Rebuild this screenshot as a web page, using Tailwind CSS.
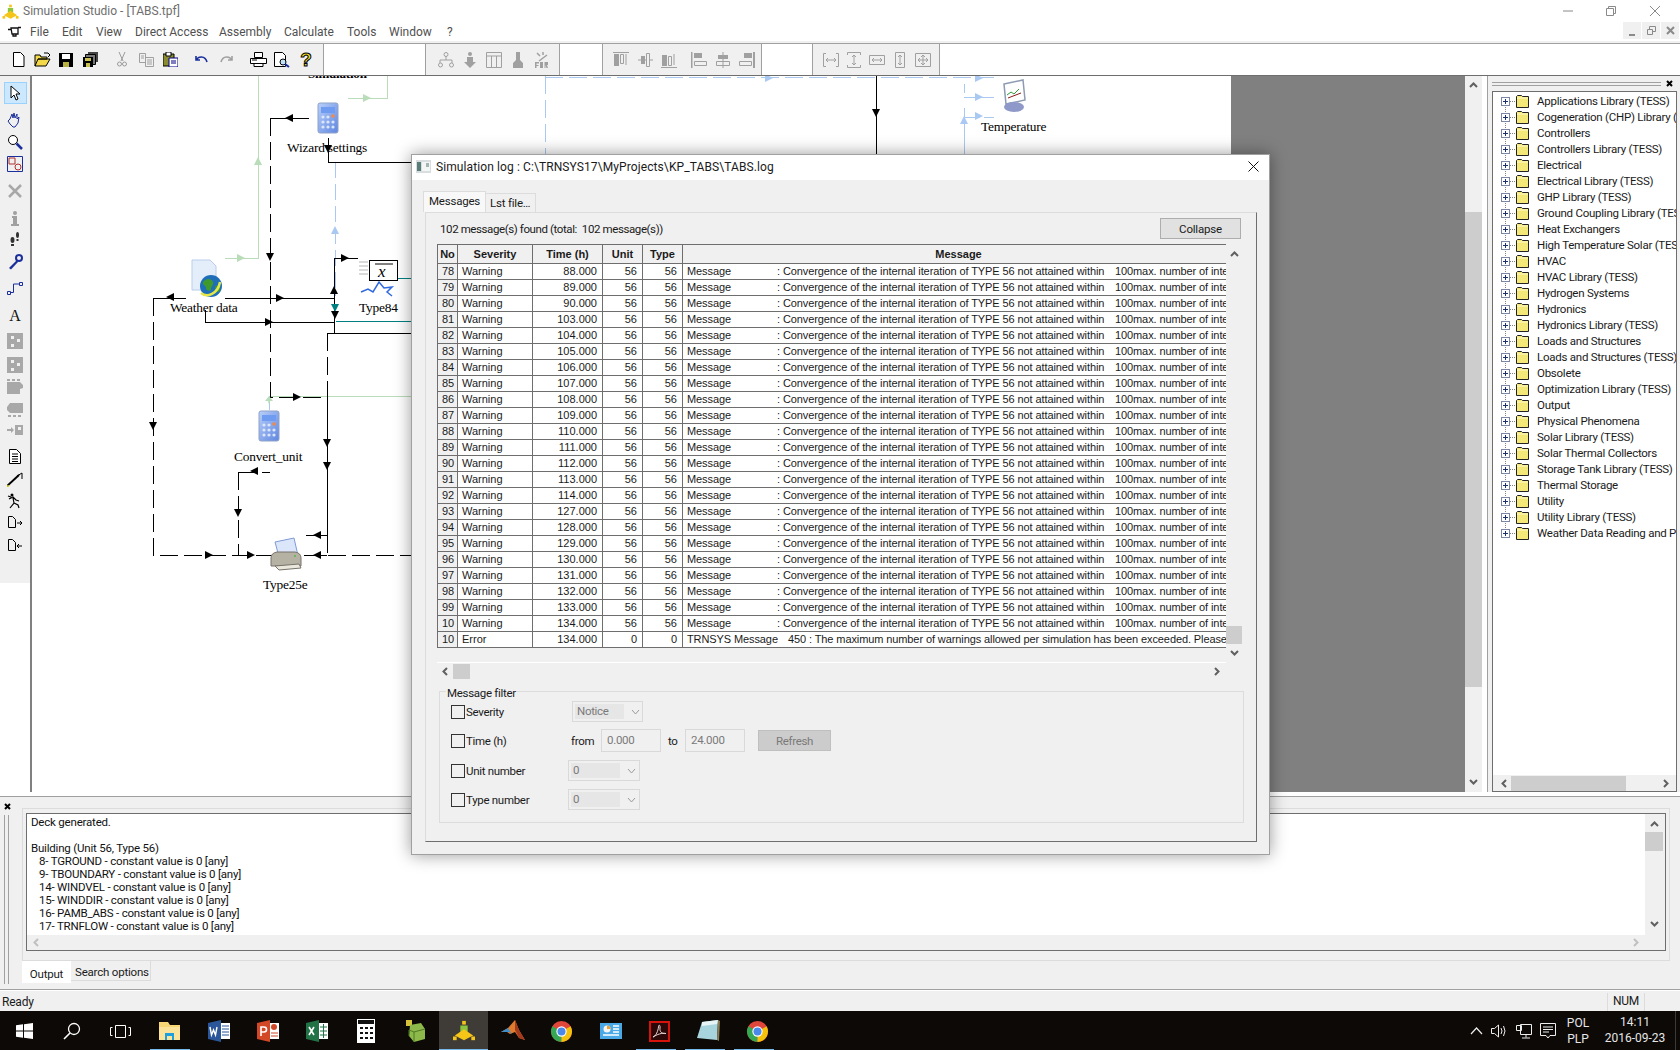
<!DOCTYPE html>
<html lang="en">
  <head>
    <title>Simulation Studio - [TABS.tpf]</title>
    <script src="https://cdn.jsdelivr.net/npm/@tailwindcss/browser@4"></script>
  </head>

  <body>
    <!-- shared icons -->
    <svg width="0" height="0" class="absolute">
      <defs>
        <path id="ar" d="M-4 -4L4 0L-4 4z" />
        <path id="al" d="M4 -4L-4 0L4 4z" />
        <path id="au" d="M-4 4L0 -4L4 4z" />
        <path id="ad" d="M-4 -4L0 4L4 -4z" />
        <linearGradient id="calcg" x1="0" y1="0" x2="1" y2="1"><stop offset="0" stop-color="#b9cffa" /><stop offset="1" stop-color="#5f86e0" /></linearGradient>
        <symbol id="calc" viewBox="0 0 22 32">
          <rect x="1" y="1" width="20" height="30" rx="2" fill="url(#calcg)" stroke="#8fa3c8" />
          <rect x="4" y="5" width="14" height="6" fill="#6f9cf0" />
          <g fill="#dbe6fb"><circle cx="6" cy="15" r="1.6" /><circle cx="11" cy="15" r="1.6" /><circle cx="6" cy="20" r="1.6" /><circle cx="11" cy="20" r="1.6" /><circle cx="16" cy="20" r="1.6" /><circle cx="6" cy="25" r="1.6" /><circle cx="11" cy="25" r="1.6" /><circle cx="16" cy="25" r="1.6" /></g>
          <circle cx="16" cy="14" r="1.8" fill="#ee8a4a" />
        </symbol>
        <symbol id="chrome" viewBox="0 0 24 24">
          <circle cx="12" cy="12" r="11" fill="#e0463a" />
          <path d="M12 12L2.5 6.5A11 11 0 0 0 12 23z" fill="#35a853" />
          <path d="M12 12L21.5 6.5A11 11 0 0 1 12 23z" fill="#f4c20d" />
          <circle cx="12" cy="12" r="5.4" fill="#fff" /><circle cx="12" cy="12" r="4.2" fill="#4a88ea" />
        </symbol>
        <symbol id="logo" viewBox="0 0 24 24">
          <rect x="10" y="1" width="4" height="4" fill="#f5c518" />
          <path d="M8 6h8v7H8z" fill="#8cc63f" />
          <path d="M12 10L22 17L12 22L2 17z" fill="#f5c518" />
          <rect x="0" y="18" width="4" height="4" fill="#f5c518" /><rect x="20" y="18" width="4" height="4" fill="#f5c518" />
        </symbol>
      </defs>
    </svg>

    <!-- Page -->
    <div class="relative w-[1680px] h-[1050px] overflow-hidden flex flex-col bg-white text-[12px] leading-[16px] tracking-[-0.2px] text-[#1a1a1a] font-['Roboto',sans-serif]">
      <!-- Title bar -->
      <div class="h-[22px] flex items-center relative shrink-0 tracking-normal">
        <svg class="ml-[2px] mt-[1px]" width="17" height="16"><use href="#logo" /></svg>
        <span class="ml-[4px] text-[#6e6e6e]">Simulation Studio - [TABS.tpf]</span>
        <div class="ml-auto flex items-center">
          <svg class="mr-[31px]" width="12" height="12" viewBox="0 0 12 12"><path d="M1 6h10" stroke="#8a8a8a" /></svg>
          <svg class="mr-[32px]" width="12" height="12" viewBox="0 0 12 12"><path d="M1.5 3.5h7v7h-7zM3.5 3.5v-2h7v7h-2" fill="none" stroke="#8a8a8a" /></svg>
          <svg class="mr-[19px]" width="12" height="12" viewBox="0 0 12 12"><path d="M1 1l10 10M11 1L1 11" stroke="#8a8a8a" /></svg>
        </div>
      </div>

      <!-- Menu bar -->
      <div class="h-[19px] flex items-center shrink-0 relative text-[#505050] tracking-normal">
        <svg class="ml-[7px] mr-[8px]" width="15" height="11" viewBox="0 0 15 11"><path d="M4 2h7v6H5zM1 3.5h3M11 1.5h3M6 8v2h3V8" fill="none" stroke="#111" stroke-width="1.3" /></svg>
        <span class="w-[32px]">File</span>
        <span class="w-[34px]">Edit</span>
        <span class="w-[39px]">View</span>
        <span class="w-[84px]">Direct Access</span>
        <span class="w-[65px]">Assembly</span>
        <span class="w-[63px]">Calculate</span>
        <span class="w-[42px]">Tools</span>
        <span class="w-[58px]">Window</span>
        <span>?</span>
        <div class="ml-auto flex gap-px mr-px h-[17px] -mt-[2px]">
          <div class="w-[18px] bg-[#f0f0f0] flex items-end justify-center pb-[3px]"><div class="w-[6px] h-[2px] bg-[#8a8a8a]"></div></div>
          <div class="w-[18px] bg-[#f0f0f0] flex items-center justify-center"><svg width="9" height="9" viewBox="0 0 9 9"><path d="M.5 3.5h5v5h-5zM2.5 3V.5h6v5H6" fill="none" stroke="#8a8a8a" /></svg></div>
          <div class="w-[18px] bg-[#f0f0f0] flex items-center justify-center"><svg width="9" height="9" viewBox="0 0 9 9"><path d="M1 1l7 7M8 1L1 8" stroke="#8a8a8a" stroke-width="2" /></svg></div>
        </div>
      </div>
      <div class="h-[2px] bg-[#f0f0f0] shrink-0"></div>
      <div class="h-px bg-[#a0a0a0] shrink-0"></div>

      <!-- Toolbars -->
      <div class="h-[32px] flex shrink-0 bg-white border-b border-[#6e6e6e]">
        <div class="w-[324px] bg-[#f0f0f0] border-r border-[#a0a0a0] flex items-center pl-[6px]">
          <div class="w-[24px] flex justify-center"><svg width="13" height="15" viewBox="0 0 13 15"><path d="M1.5 .5h7l3.5 3.500v10.500H1.500z" fill="#fff" stroke="#000" /></svg></div>
          <div class="w-[24px] flex justify-center"><svg width="17" height="15" viewBox="0 0 17 15"><path d="M1 3h5l1 2h6v2H4L1 14zM1 14h11l4-7H4" fill="#f3d94a" stroke="#000" /><path d="M10 1h4l2 2-2 2" fill="none" stroke="#000" /></svg></div>
          <div class="w-[24px] flex justify-center"><svg width="14" height="14" viewBox="0 0 14 14"><path d="M0 0h14v14H0z" fill="#000" /><path d="M3 1h8v5H3z" fill="#fff" /><path d="M4 9h6v5H4z" fill="#b8b040" /></svg></div>
          <div class="w-[24px] flex justify-center"><svg width="15" height="15" viewBox="0 0 15 15"><path d="M5 0h10v10H5z" fill="#444" /><path d="M2.500 2.500h10v10h-10z" fill="#777" stroke="#000" /><path d="M0 5h10v10H0z" fill="#000" /><path d="M2 6h6v3H2z" fill="#c8c050" /><path d="M3 11h4v4H3z" fill="#c8c050" /></svg></div>
          <div class="w-[24px] ml-[8px] flex justify-center"><svg width="10" height="15" viewBox="0 0 10 15"><path d="M2 0l4 9M8 0L4 9" stroke="#9a9a9a" /><circle cx="2.500" cy="12" r="2" fill="none" stroke="#9a9a9a" /><circle cx="7.500" cy="12" r="2" fill="none" stroke="#9a9a9a" /></svg></div>
          <div class="w-[24px] flex justify-center"><svg width="15" height="14" viewBox="0 0 15 14"><path d="M.5 .5h6v9h-6zM6.500 4.500h8v9h-8zM2 3h3M2 5h3M8 7h5M8 9h5M8 11h5" fill="#f0f0f0" stroke="#a0a0a0" /></svg></div>
          <div class="w-[24px] flex justify-center"><svg width="15" height="15" viewBox="0 0 15 15"><path d="M0 2h11v12H0z" fill="#8a8a30" stroke="#000" /><path d="M3 0h5v4H3z" fill="#fff" stroke="#000" /><path d="M6 6h9v9H6z" fill="#fff" stroke="#000080" /><path d="M8 9h5M8 11h5" stroke="#000080" /></svg></div>
          <div class="w-[24px] ml-[7px] flex justify-center"><svg width="13" height="9" viewBox="0 0 13 9"><path d="M1 1v4h4M1.500 5C3 1.500 10 0 12 7" fill="none" stroke="#1a2f9c" stroke-width="1.600" /></svg></div>
          <div class="w-[24px] ml-px flex justify-center"><svg width="13" height="9" viewBox="0 0 13 9"><path d="M12 1v4H8M11.500 5C10 1.500 3 0 1 7" fill="none" stroke="#a0a0a0" stroke-width="1.600" /></svg></div>
          <div class="w-[24px] ml-[8px] flex justify-center"><svg width="17" height="15" viewBox="0 0 17 15"><path d="M4.500 .5h8v5h-8zM.5 6.500h16v5H.500zM4 11.500h9v3H4z" fill="#fff" stroke="#000" /><path d="M2 8h5" stroke="#000" /></svg></div>
          <div class="w-[24px] flex justify-center"><svg width="16" height="16" viewBox="0 0 16 16"><path d="M.5 .5h8l3 3v11H.500z" fill="#fff" stroke="#000" /><circle cx="9" cy="10" r="3" fill="#bfe3f5" stroke="#000" /><path d="M11 12l4 3" stroke="#1a2f9c" stroke-width="2" /></svg></div>
          <div class="w-[24px] flex justify-center font-['Liberation_Sans',sans-serif] font-bold text-[19px] text-[#f4e22a] [-webkit-text-stroke:1px_#000]">?</div>
        </div>
        <div class="w-[101px]"></div>
        <div class="w-[135px] bg-[#f0f0f0] border-x border-[#a0a0a0] flex items-center pl-[8px]">
          <div class="w-[24px] flex justify-center"><svg width="16" height="16" viewBox="0 0 16 16"><path d="M8 4v4M2 8h12M2 8v3M14 8v3" stroke="#a0a0a0" fill="none" /><circle cx="8" cy="2.500" r="2" fill="none" stroke="#a0a0a0" /><circle cx="2.500" cy="13" r="2" fill="none" stroke="#a0a0a0" /><circle cx="13.500" cy="13" r="2" fill="none" stroke="#a0a0a0" /></svg></div>
          <div class="w-[24px] flex justify-center"><svg width="12" height="16" viewBox="0 0 12 16"><circle cx="6" cy="2" r="2" fill="#a0a0a0" /><path d="M3 5h6v5h3l-6 6-6-6h3z" fill="#a0a0a0" /></svg></div>
          <div class="w-[24px] flex justify-center"><svg width="16" height="16" viewBox="0 0 16 16"><path d="M.5 .5h15v15H.500zM.5 4h15M5.500 4v11.500M10.500 4v11.500" fill="none" stroke="#a0a0a0" /></svg></div>
          <div class="w-[24px] flex justify-center"><svg width="10" height="16" viewBox="0 0 10 16"><path d="M3 0h4v8l3 3v5H0v-5l3-3z" fill="#a0a0a0" /></svg></div>
          <div class="w-[24px] flex justify-center"><svg width="16" height="16" viewBox="0 0 16 16"><path d="M3 1l3 3M9 0v3M13 3l-8 6" stroke="#a0a0a0" stroke-width="1.500" /><path d="M1 10h4v1.500H2.500V13H4.500v1H2.500v2H1zM6 10h3v6H6zM10.500 10H14v3h-1l1 3h-1.500l-1-3v3h-1z" fill="#a0a0a0" /></svg></div>
        </div>
        <div class="w-[42px]"></div>
        <div class="w-[160px] bg-[#f0f0f0] border-x border-[#a0a0a0] flex items-center pl-[6px]">
          <div class="w-[24px] flex justify-center"><svg width="16" height="16" viewBox="0 0 16 16"><path d="M0 .5h16" stroke="#a0a0a0" /><path d="M1 2h5v12H1z" fill="#a0a0a0" /><path d="M7.500 2.500h3v9h-3z" fill="none" stroke="#a0a0a0" /><path d="M13 2v11" stroke="#a0a0a0" /></svg></div>
          <div class="w-[24px] flex justify-center"><svg width="15" height="14" viewBox="0 0 15 14"><path d="M0 7h15" stroke="#a0a0a0" /><path d="M3 3h4v8H3z" fill="#a0a0a0" /><path d="M8.500 .5h3v13h-3z" fill="#f0f0f0" stroke="#a0a0a0" /></svg></div>
          <div class="w-[24px] flex justify-center"><svg width="16" height="16" viewBox="0 0 16 16"><path d="M0 15.500h16" stroke="#a0a0a0" /><path d="M1 3h5v11H1z" fill="#a0a0a0" /><path d="M7.500 4.500h3v9h-3z" fill="none" stroke="#a0a0a0" /><path d="M13 2v11" stroke="#a0a0a0" /></svg></div>
          <div class="w-[24px] ml-[6px] flex justify-center"><svg width="16" height="16" viewBox="0 0 16 16"><path d="M.5 0v16" stroke="#a0a0a0" stroke-width="2" /><path d="M3 1h8v5H3z" fill="#a0a0a0" /><path d="M3.500 9.500h12v4h-12z" fill="none" stroke="#a0a0a0" /></svg></div>
          <div class="w-[24px] flex justify-center"><svg width="14" height="16" viewBox="0 0 14 16"><path d="M7 0v16" stroke="#a0a0a0" /><path d="M2 3h10v4H2z" fill="#a0a0a0" /><path d="M.5 9.500h13v4H.500z" fill="none" stroke="#a0a0a0" /></svg></div>
          <div class="w-[24px] flex justify-center"><svg width="16" height="16" viewBox="0 0 16 16"><path d="M15 0v16" stroke="#a0a0a0" stroke-width="2" /><path d="M5 1h8v5H5z" fill="#a0a0a0" /><path d="M.5 9.500h12v4H.500z" fill="none" stroke="#a0a0a0" /></svg></div>
        </div>
        <div class="w-[50px]"></div>
        <div class="w-[128px] bg-[#f0f0f0] border-x border-[#a0a0a0] flex items-center pl-[6px]">
          <div class="w-[23px] flex justify-center"><svg width="16" height="14" viewBox="0 0 16 14"><path d="M3 .5H.5v13H3M13 .5h2.500v13H13M3 7h10M5 5L3 7l2 2M11 5l2 2-2 2" fill="none" stroke="#a0a0a0" /></svg></div>
          <div class="w-[23px] flex justify-center"><svg width="14" height="16" viewBox="0 0 14 16"><path d="M.5 3V.5h13V3M.5 13v2.500h13V13M7 3v10M5 5l2-2 2 2M5 11l2 2 2-2" fill="none" stroke="#a0a0a0" /></svg></div>
          <div class="w-[23px] flex justify-center"><svg width="16" height="10" viewBox="0 0 16 10"><path d="M.5 .5h15v9H.500zM3 5h10M5 3L3 5l2 2M11 3l2 2-2 2" fill="none" stroke="#a0a0a0" /></svg></div>
          <div class="w-[23px] flex justify-center"><svg width="10" height="16" viewBox="0 0 10 16"><path d="M.5 .5h9v15h-9zM5 3v10M3 5l2-2 2 2M3 11l2 2 2-2" fill="none" stroke="#a0a0a0" /></svg></div>
          <div class="w-[23px] flex justify-center"><svg width="16" height="14" viewBox="0 0 16 14"><path d="M.5 .5h15v13H.500zM3 7h10M8 2v10M5 5L3 7l2 2M11 5l2 2-2 2M6 4l2-2 2 2M6 10l2 2 2-2" fill="none" stroke="#a0a0a0" /></svg></div>
        </div>
      </div>

      <!-- Middle: left tools, canvas, library tree -->
      <div class="h-[716px] flex shrink-0">
        <div class="w-[30px] bg-white shrink-0">
          <div class="h-[507px] bg-[#f0f0f0] flex flex-col items-center">
            <div class="mt-[6px] w-[23px] h-[22px] bg-[#cce8ff] border border-[#99d1ff] flex items-center justify-center"><svg width="10" height="16" viewBox="0 0 10 16"><path d="M1 1v12l3-3 2 5 2-1-2-5h4z" fill="#fff" stroke="#000" /></svg></div>
            <svg class="mt-[8px]" width="16" height="16" viewBox="0 0 16 16"><path d="M3 7L5 2l1 4 1-5 1 5 2-4v5l2-2-1 6-3 4H6L3 12 1 9z" fill="none" stroke="#1a2f9c" /></svg>
            <svg class="mt-[6px]" width="16" height="16" viewBox="0 0 16 16"><circle cx="6" cy="6" r="4.500" fill="#fff" stroke="#000" /><path d="M9.500 9.500L15 15" stroke="#1a2f9c" stroke-width="2.500" /></svg>
            <svg class="mt-[6px]" width="16" height="16" viewBox="0 0 16 16"><path d="M.5 .5h15v15H.500z" fill="none" stroke="#1a2f9c" /><path d="M2 2h6v6H2z" fill="none" stroke="#b03030" /><circle cx="11" cy="11" r="3" fill="none" stroke="#b03030" /></svg>
            <svg class="mt-[12px]" width="14" height="14" viewBox="0 0 14 14"><path d="M1 1l12 12M13 1L1 13" stroke="#a8a8a8" stroke-width="2.500" /></svg>
            <svg class="mt-[13px]" width="8" height="15" viewBox="0 0 8 15"><circle cx="4" cy="2" r="2" fill="#a0a0a0" /><path d="M1 5h5v8h2v2H0v-2h2V7H1z" fill="#a0a0a0" /></svg>
            <svg class="mt-[6px]" width="10" height="14" viewBox="0 0 10 14"><ellipse cx="7.500" cy="3" rx="1.500" ry="3" fill="#333" /><ellipse cx="2.500" cy="8" rx="2" ry="3" fill="#333" /><rect x="1" y="12" width="3" height="2" fill="#333" /><rect x="6.500" y="7" width="2" height="2" fill="#333" /></svg>
            <svg class="mt-[8px]" width="15" height="16" viewBox="0 0 15 16"><circle cx="11" cy="4" r="3" fill="none" stroke="#1a2f9c" stroke-width="2" /><path d="M9 6L1 14l2 1.500L10 8" fill="#1a2f9c" /></svg>
            <svg class="mt-[12px]" width="16" height="13" viewBox="0 0 16 13"><path d="M.5 9.500h3v3h-3zM12.500 .5h3v3h-3zM3.500 10.500h3V2h6" fill="none" stroke="#1a2f9c" /></svg>
            <div class="mt-[12px] h-[18px] font-['Liberation_Serif',serif] font-normal text-[16px] leading-[18px] text-[#111]">A</div>
            <svg class="mt-[8px]" width="16" height="16" viewBox="0 0 16 16"><path d="M0 0h16v16H0z" fill="#a8a8a8" /><path d="M4 3h3v3H4zM10 6h3v3h-3zM4 11h3v3H4z" fill="#f0f0f0" /></svg>
            <svg class="mt-[8px]" width="16" height="16" viewBox="0 0 16 16"><path d="M0 0h16v16H0z" fill="#a8a8a8" /><path d="M4 3h3v3H4zM10 6h3v3h-3zM4 11h3v3H4z" fill="#f0f0f0" /></svg>
            <svg class="mt-[6px]" width="16" height="15" viewBox="0 0 16 15"><path d="M0 3h13l3 3v3l-3 1v5H0z" fill="#a8a8a8" /><path d="M0 0h3v2H0zM5 0h3v2H5zM10 0h3v2h-3z" fill="#a8a8a8" /></svg>
            <svg class="mt-[9px]" width="16" height="15" viewBox="0 0 16 15"><path d="M3 0h13v10H3l-3-3V4z" fill="#a8a8a8" /><path d="M1 12h3v2H1zM6 12h3v2H6zM11 12h3v2h-3z" fill="#a8a8a8" /></svg>
            <svg class="mt-[7px]" width="16" height="10" viewBox="0 0 16 10"><path d="M0 4h4V2l3 3-3 3V6H0zM8 0h8v10H8z" fill="#a8a8a8" /><path d="M11 2h3v3h-3z" fill="#f0f0f0" /></svg>
            <svg class="mt-[14px]" width="12" height="15" viewBox="0 0 12 15"><path d="M.5 .5h7l4 4v10H.500zM3 5h6M3 7.500h6M3 10h6M3 12.500h6" fill="#fff" stroke="#000" /></svg>
            <svg class="mt-[8px]" width="16" height="15" viewBox="0 0 16 15"><path d="M0 14L12 3" stroke="#000" stroke-width="2" /><path d="M10 4l5-3v6" fill="none" stroke="#000" /><path d="M0 14h2" stroke="#e8d800" stroke-width="1.500" /></svg>
            <svg class="mt-[6px]" width="16" height="16" viewBox="0 0 16 16"><circle cx="5" cy="2" r="1.500" fill="#000" /><path d="M2 6l4-2 3 3 3 1M6 5l1 5-4 5M7 10l4 2 1 3M1 3l3 1" fill="none" stroke="#000" stroke-width="1.200" /></svg>
            <svg class="mt-[7px]" width="15" height="12" viewBox="0 0 15 12"><path d="M.5 .5h4l3 3v8h-7zM9 7h5M12 5l2 2-2 2" fill="none" stroke="#000" /></svg>
            <svg class="mt-[11px]" width="15" height="12" viewBox="0 0 15 12"><path d="M.5 .5h4l3 3v8h-7zM9 7h5M11 5L9 7l2 2" fill="none" stroke="#000" /></svg>
          </div>
        </div>
        <div class="w-[2px] bg-[#808080] shrink-0"></div>

        <!-- Canvas (page coordinates via the translate below) -->
        <div class="w-[1199px] relative overflow-hidden bg-white shrink-0">
          <svg class="absolute inset-0" width="1199" height="716">
            <g transform="translate(-32 -76)" fill="none">
              <text x="308" y="78" fill="#000" stroke="none" font-family="Liberation Serif" font-weight="700" font-size="13">Simulation</text>
              <g shape-rendering="crispEdges">
                <g stroke="#b9dcb9">
                  <path d="M258 76V258H225M348 98H387.500V76M270 396H411" />
                </g>
                <g stroke="#a9c9f2">
                  <path d="M335 162V296" stroke-dasharray="16 6" />
                  <path d="M545 76V154M545 77H994" stroke-dasharray="18 6" />
                  <path d="M964 84V93M964 108V154M964 97H994" />
                  <path d="M964 117H994" stroke-dasharray="16 4" />
                  <path d="M269 396V410" />
                </g>
                <g stroke="#008080"><path d="M398 278H411M336 321H411" /></g>
                <g stroke="#000">
                  <path d="M309 118H270M328 138V162H411M876 76V154M225 298H335M186 298H153M205 310V322H335M334 258V333M334 258H358M327 397V535M327 535H306M327 555H306M327 333H411" />
                  <path d="M270 118V397H327M153 298V555H411M238 472V555M238 472H270M327 333V397M327 535V555" stroke-dasharray="18 6" />
                </g>
              </g>
              <g fill="#b9dcb9"><use href="#au" x="258" y="161" /><use href="#ar" x="241" y="258" /><use href="#ar" x="367" y="98" /></g>
              <g fill="#a9c9f2"><use href="#au" x="335" y="230" /><use href="#ar" x="769" y="78" /><use href="#ar" x="979" y="78" /><use href="#ar" x="979" y="97" /><use href="#ar" x="979" y="116" /><use href="#au" x="964" y="120" /></g>
              <path d="M269 396l-4 5h3l1 4 1-4h3z" fill="#b9dcb9" />
              <use href="#ad" x="335" y="308" fill="#008080" />
              <g fill="#000">
                <use href="#al" x="289" y="118" /><use href="#ad" x="328" y="149" /><use href="#ad" x="876" y="113" /><use href="#ad" x="270" y="257" />
                <use href="#ar" x="280" y="298" /><use href="#al" x="170" y="297" /><use href="#ad" x="153" y="426" /><use href="#ar" x="209" y="555" /><use href="#ar" x="251" y="555" />
                <use href="#ad" x="238" y="513" /><use href="#al" x="254" y="471" /><use href="#al" x="317" y="555" /><use href="#al" x="317" y="535" />
                <use href="#ad" x="327" y="443" /><use href="#ad" x="327" y="466" /><use href="#ar" x="345" y="258" /><use href="#au" x="334" y="290" /><use href="#ad" x="335" y="315" />
                <use href="#ar" x="269" y="322" /><use href="#ar" x="297" y="397" />
              </g>

              <use href="#calc" x="317" y="102" width="22" height="32" />
              <use href="#calc" x="258" y="410" width="22" height="32" />
              <!-- weather -->
              <path d="M192 260h18l6 6v24h-24z" fill="#e4eefb" stroke="#b8cdec" />
              <circle cx="211" cy="286" r="11" fill="#1f6fb8" />
              <path d="M203 282c4-5 9-3 10 0s-2 4-2 7-5 2-5-1-4-3-3-6zM215 286c3-1 5 0 5 3s-3 4-4 2z" fill="#3f9a2e" />
              <path d="M201 293c6 5 17 1 19-11" stroke="#e6e84a" stroke-width="2.500" />
              <!-- type84 -->
              <path d="M359 262h9M359 266h9M359 270h9M359 274h9" stroke="#b5b5b5" />
              <rect x="369.500" y="260.500" width="28" height="20" fill="#fff" stroke="#000" />
              <path d="M375 264h18" stroke="#000" />
              <text x="378" y="277" fill="#000" stroke="none" font-family="Liberation Serif" font-style="italic" font-size="17">x</text>
              <path d="M361 292l7-3 5 3 6-10 5 6 8-1-5 5 5 4" stroke="#2f6ae0" stroke-width="1.500" />
              <!-- monitor -->
              <path d="M1004 84l19-4 2 20-19 4z" fill="#fff" stroke="#8e9bb3" stroke-width="1.500" />
              <path d="M1007 95l4-3 3 2 5-5" stroke="#2e9d3a" />
              <path d="M1008 98l13-5" stroke="#8a1c1c" />
              <ellipse cx="1014" cy="107" rx="10" ry="5" fill="#8f99c9" />
              <!-- printer -->
              <path d="M275 542l19-4 5 22-18 4z" fill="#dce6fa" stroke="#7f9ad6" />
              <path d="M271 558q0-5 6-6h18q6 1 6 6v8h-30z" fill="#b5b1a3" stroke="#77736a" />
              <path d="M275 566l24-2 2 4-22 2z" fill="#eae7dd" stroke="#77736a" />
              <circle cx="295" cy="556" r="1" fill="#53b84b" />

              <g fill="#000" stroke="none" font-family="Liberation Serif" font-size="13.400">
                <text x="287" y="152">Wizard settings</text>
                <text x="981" y="131">Temperature</text>
                <text x="170" y="312">Weather data</text>
                <text x="359" y="312">Type84</text>
                <text x="234" y="461">Convert_unit</text>
                <text x="263" y="589">Type25e</text>
              </g>
            </g>
          </svg>
        </div>
        <div class="w-[234px] bg-[#808080] shrink-0"></div>

        <!-- Main vertical scrollbar -->
        <div class="w-[17px] bg-[#f0f0f0] flex flex-col items-center shrink-0">
          <svg class="mt-[6px]" width="9" height="6" viewBox="0 0 9 6"><path d="M1 5l3.500-3.500L8 5" fill="none" stroke="#606060" stroke-width="2" /></svg>
          <div class="mt-[124px] w-full h-[475px] bg-[#cdcdcd]"></div>
          <svg class="mt-[92px]" width="9" height="6" viewBox="0 0 9 6"><path d="M1 1l3.500 3.500L8 1" fill="none" stroke="#606060" stroke-width="2" /></svg>
        </div>
        <div class="w-[2px] bg-white shrink-0"></div>

        <!-- Library tree -->
        <div class="flex-1 bg-[#f0f0f0] border-l border-[#a0a0a0] ml-[3px] flex flex-col min-w-0">
          <div class="h-[15px] flex items-center pl-[4px] shrink-0">
            <div class="w-[169px] h-[4px] border-y border-[#a0a0a0]"></div>
            <svg class="ml-[4px]" width="9" height="9" viewBox="0 0 9 9"><path d="M2 2l5 5M7 2L2 7" stroke="#000" stroke-width="2" /></svg>
          </div>
          <div class="ml-[4px] mr-[3px] h-[701px] border border-[#6e6e6e] bg-white flex flex-col overflow-hidden">
            <div id="tree" class="flex-1 pt-[1px] overflow-hidden whitespace-nowrap text-[11.5px] tracking-[-0.25px]"></div>
            <div class="h-[16px] bg-[#f0f0f0] flex items-center shrink-0">
              <svg class="ml-[8px]" width="6" height="9" viewBox="0 0 6 9"><path d="M5 1L1.500 4.500 5 8" fill="none" stroke="#606060" stroke-width="2" /></svg>
              <div class="ml-[4px] w-[115px] h-[15px] bg-[#cdcdcd]"></div>
              <svg class="ml-[37px]" width="6" height="9" viewBox="0 0 6 9"><path d="M1 1l3.500 3.500L1 8" fill="none" stroke="#606060" stroke-width="2" /></svg>
            </div>
          </div>
        </div>
      </div>

      <!-- Output panel -->
      <div class="h-[4px] bg-white shrink-0"></div>
      <div class="h-px bg-[#a0a0a0] shrink-0"></div>
      <div class="h-[192px] bg-[#f0f0f0] shrink-0 flex text-[11.5px]">
        <div class="w-[21px] shrink-0 flex flex-col">
          <svg class="mt-[5px] ml-[3px]" width="9" height="9" viewBox="0 0 9 9"><path d="M2 2l5 5M7 2L2 7" stroke="#000" stroke-width="2" /></svg>
          <div class="mt-[4px] ml-[4px] w-[5px] h-[169px] border-x border-[#a0a0a0]"></div>
        </div>
        <div class="flex-1 flex flex-col pr-[10px]">
          <div class="mt-[11px] ml-px mr-0 h-[153px] border border-[#dcdcdc] pt-[4px] pl-[3px] pr-[3px]">
            <div class="h-[138px] border border-[#6e6e6e] flex flex-col">
              <div class="flex h-[121px]">
                <div class="flex-1 bg-white pl-[4px] pt-[2px] leading-[13px] whitespace-pre text-[#111]">Deck generated.

Building (Unit 56, Type 56)
   8- TGROUND - constant value is 0 [any]
   9- TBOUNDARY - constant value is 0 [any]
   14- WINDVEL - constant value is 0 [any]
   15- WINDDIR - constant value is 0 [any]
   16- PAMB_ABS - constant value is 0 [any]
   17- TRNFLOW - constant value is 0 [any]</div>
                <div class="w-[18px] mr-[2px] bg-[#f0f0f0] flex flex-col items-center">
                  <svg class="mt-[7px]" width="9" height="6" viewBox="0 0 9 6"><path d="M1 5l3.500-3.500L8 5" fill="none" stroke="#606060" stroke-width="2" /></svg>
                  <div class="mt-[5px] w-full h-[19px] bg-[#cdcdcd]"></div>
                  <svg class="mt-[70px]" width="9" height="6" viewBox="0 0 9 6"><path d="M1 1l3.500 3.500L8 1" fill="none" stroke="#606060" stroke-width="2" /></svg>
                </div>
              </div>
              <div class="h-[15px] flex items-center justify-between px-[6px] pr-[26px]">
                <svg width="6" height="9" viewBox="0 0 6 9"><path d="M5 1L1.500 4.500 5 8" fill="none" stroke="#c0c0c0" stroke-width="2" /></svg>
                <svg width="6" height="9" viewBox="0 0 6 9"><path d="M1 1l3.500 3.500L1 8" fill="none" stroke="#c0c0c0" stroke-width="2" /></svg>
              </div>
            </div>
          </div>
          <div class="flex items-start">
            <div class="w-[49px] h-[22px] ml-px bg-white text-center pt-[5px]">Output</div>
            <div class="w-[80px] h-[20px] border-r border-b border-[#dcdcdc] pt-[3px] pl-[4px] whitespace-nowrap">Search options</div>
          </div>
        </div>
      </div>
      <div class="h-px bg-[#a0a0a0] shrink-0"></div>
      <div class="h-px bg-white shrink-0"></div>

      <!-- Status bar -->
      <div class="h-[20px] bg-[#f0f0f0] flex items-center shrink-0 pt-px">
        <span class="ml-[2px]">Ready</span>
        <div class="ml-auto mr-[35px] w-[38px] h-[18px] border-x border-[#dcdcdc] text-center">NUM</div>
      </div>

      <!-- Taskbar -->
      <div class="h-[40px] bg-[#0c0906] flex text-[#e6e6e6] shrink-0">
        <div class="w-[48px] flex items-center justify-center"><svg width="17" height="16" viewBox="0 0 17 16"><path d="M0 2.300L7 1.300V7.500H0zM8 1.200L17 0V7.500H8zM0 8.500H7V14.700L0 13.700zM8 8.500H17V16L8 14.800z" fill="#fff" /></svg></div>
        <div class="w-[48px] flex items-center justify-center"><svg width="18" height="18" viewBox="0 0 18 18"><circle cx="11" cy="7" r="5.500" fill="none" stroke="#fff" stroke-width="1.300" /><path d="M7 11l-6 6" stroke="#fff" stroke-width="1.600" /></svg></div>
        <div class="w-[49px] flex items-center justify-center"><svg width="21" height="13" viewBox="0 0 21 13"><path d="M5.500 .5h10v12h-10zM2.500 2.500H.5v8h2M18.500 2.500h2v8h-2" fill="none" stroke="#fff" /></svg></div>
        <div class="w-[49px] relative flex items-center justify-center"><svg width="21" height="18" viewBox="0 0 21 18"><path d="M0 0h9l2 3h10v15H0z" fill="#f7d774" /><path d="M0 5h21v13H0z" fill="#fbe39a" /><path d="M6 11h9v7h-2v-4H8v4H6z" fill="#1e9fe0" /></svg><div class="absolute bottom-0 left-[5px] w-[40px] h-[2px] bg-[#76b9ed]"></div></div>
        <div class="w-[49px] flex items-center justify-center"><svg width="22" height="22" viewBox="0 0 22 22"><path d="M0 3l13-3v22L0 19z" fill="#2b579a" /><path d="M13 3h9v16h-9z" fill="#fff" /><path d="M14 6h7M14 9h7M14 12h7M14 15h7" stroke="#2b579a" /><path d="M2 7l1.500 8 2-5 2 5L9 7" fill="none" stroke="#fff" stroke-width="1.400" /></svg></div>
        <div class="w-[49px] flex items-center justify-center"><svg width="22" height="22" viewBox="0 0 22 22"><path d="M0 3l13-3v22L0 19z" fill="#d24726" /><path d="M13 3h9v16h-9z" fill="#fff" /><path d="M14 13h7M14 16h7" stroke="#d24726" /><circle cx="17" cy="7" r="3" fill="#d24726" /><path d="M4 16V7h3a2.500 2.500 0 0 1 0 5H4" fill="none" stroke="#fff" stroke-width="1.600" /></svg></div>
        <div class="w-[49px] flex items-center justify-center"><svg width="22" height="22" viewBox="0 0 22 22"><path d="M0 3l13-3v22L0 19z" fill="#217346" /><path d="M13 3h9v16h-9z" fill="#fff" /><path d="M14 7h7M14 11h7M14 15h7M17.500 4v14" stroke="#217346" /><path d="M3 7l5 8M8 7l-5 8" stroke="#fff" stroke-width="1.600" /></svg></div>
        <div class="w-[49px] flex items-center justify-center"><svg width="18" height="24" viewBox="0 0 18 24"><path d="M0 0h18v24H0z" fill="#fff" /><path d="M1 1h16v4H1z" fill="#111" /><path d="M3 8h3v2H3zM8 8h3v2H8zM13 8h3v2h-3zM3 13h3v2H3zM8 13h3v2H8zM13 13h3v2h-3zM3 18h3v2H3zM8 18h3v2H8zM13 18h3v2h-3z" fill="#111" /></svg></div>
        <div class="w-[49px] flex items-center justify-center"><svg width="24" height="24" viewBox="0 0 24 24"><path d="M3 1h6v6H3z" fill="#d6c33b" /><path d="M7 6l11-2 4 6v10l-11 3-5-6z" fill="#8db84a" /><path d="M11 23V13l11-3" fill="none" stroke="#4f7a24" /><path d="M6 17v-6l5 2" fill="none" stroke="#4f7a24" /></svg></div>
        <div class="w-[49px] relative bg-[#3f3c38] flex items-center justify-center"><svg width="24" height="22"><use href="#logo" /></svg><div class="absolute bottom-0 left-0 w-full h-[2px] bg-[#76b9ed]"></div></div>
        <div class="w-[49px] flex items-center justify-center"><svg width="24" height="22" viewBox="0 0 24 22"><path d="M0 12l7-4 7-8 4 10 6 10-6-2-4-6-5 2-3-2z" fill="#dd7b2f" /><path d="M0 12l7-4 4 6-3-2z" fill="#3f8dc9" /><path d="M14 0l4 10 6 10-6-2-4-8z" fill="#a3391d" /></svg></div>
        <div class="w-[49px] flex items-center justify-center"><svg width="23" height="23"><use href="#chrome" /></svg></div>
        <div class="w-[49px] flex items-center justify-center"><svg width="22" height="16" viewBox="0 0 22 16"><path d="M0 0h22v16H0z" fill="#4aa8e6" /><circle cx="7" cy="6" r="3.500" fill="#f5f5f5" /><path d="M7 6V2.500A3.500 3.500 0 0 1 10.500 6z" fill="#f0a030" /><path d="M13 3h6M13 6h6M13 9h6M3 12h16" stroke="#fff" stroke-width="1.300" /></svg></div>
        <div class="w-[49px] relative flex items-center justify-center"><div class="w-[21px] h-[21px] bg-[#2b0707] border-2 border-[#d7140c] flex items-center justify-center"><svg width="15" height="15" viewBox="0 0 15 15"><path d="M1 13c3-1 5-6 5.500-10 0-3 2-2 1.500 1-.5 4 2 6 6 5.500-4-1-9 1-13 3.500z" fill="none" stroke="#e6d9d9" /></svg></div><div class="absolute bottom-0 left-[1px] w-[40px] h-[2px] bg-[#76b9ed]"></div></div>
        <div class="w-[49px] relative flex items-center justify-center"><svg width="23" height="22" viewBox="0 0 23 22"><path d="M5 2l16-2-1 20-20-2z" fill="#a8d4de" /><path d="M5 2l16-2-1 4L5 6z" fill="#e7f4f6" /><path d="M21 0l2 1-1 20-2-1z" fill="#8b7d55" /></svg><div class="absolute bottom-0 left-[1px] w-[40px] h-[2px] bg-[#76b9ed]"></div></div>
        <div class="w-[49px] relative flex items-center justify-center"><svg width="23" height="23"><use href="#chrome" /></svg><div class="absolute bottom-0 left-[1px] w-[40px] h-[2px] bg-[#76b9ed]"></div></div>
        <div class="ml-auto flex items-center tracking-normal">
          <svg class="mr-[8px]" width="13" height="8" viewBox="0 0 13 8"><path d="M1 7l5.500-6L12 7" fill="none" stroke="#eee" stroke-width="1.200" /></svg>
          <svg class="mr-[9px]" width="16" height="14" viewBox="0 0 16 14"><path d="M.5 4.500h3l4-3.500v12l-4-3.500h-3zM10 4q2 3 0 6M12.500 2q3 5 0 10" fill="none" stroke="#eee" /></svg>
          <svg class="mr-[8px]" width="16" height="15" viewBox="0 0 16 15"><path d="M4.500 .5h11v10h-11zM.5 1.500h5v5h-5zM10 10.500v3M6 14h8" fill="#0c0906" stroke="#eee" /></svg>
          <svg class="mr-[7px]" width="16" height="16" viewBox="0 0 16 16"><path d="M.5 .5h15v12H10l-2 2.500-2-2.500H.5zM3 4h10M3 6.500h10M3 9h6" fill="none" stroke="#eee" /></svg>
          <div class="w-[30px] flex flex-col items-center leading-[16px] mr-[11px]"><span>POL</span><span>PLP</span></div>
          <div class="w-[62px] flex flex-col items-center leading-[16px] mr-[9px] pb-[2px]"><span>14:11</span><span>2016-09-23</span></div>
          <div class="w-px h-full bg-[#3a3a3a] mr-[4px]"></div>
        </div>
      </div>

      <!-- Simulation log dialog -->
      <div class="absolute left-[411px] top-[154px] w-[859px] h-[701px] bg-[#f0f0f0] border border-[#a0a0a0] shadow-[0_0_16px_rgba(0,0,0,0.4)] flex flex-col">
        <div class="h-[25px] bg-white flex items-center shrink-0 tracking-[0.1px] pb-[2px]">
          <svg class="ml-[4px]" width="15" height="13" viewBox="0 0 15 13"><path d="M0 0h15v13H0z" fill="#d8dde0" /><path d="M1 2h4v9H1z" fill="#5a7d7a" /><path d="M6 2h8v9H6z" fill="#f4f6f6" /><path d="M10 3h3v4h-3z" fill="#a5b5b5" /></svg>
          <span class="ml-[5px]">Simulation log : C:\TRNSYS17\MyProjects\KP_TABS\TABS.log</span>
          <svg class="ml-auto mr-[10px]" width="11" height="11" viewBox="0 0 11 11"><path d="M.5 .5l10 10M10.500 .5l-10 10" stroke="#111" /></svg>
        </div>

        <div class="h-[11px] shrink-0"></div>
        <div class="flex items-end h-[21px] ml-[11px] shrink-0 whitespace-nowrap text-[11.5px]">
          <div class="w-[63px] h-[21px] bg-[#f8f8f8] border-x border-t border-[#dcdcdc] text-center pt-[1px]">Messages</div>
          <div class="w-[50px] h-[19px] border-r border-t border-[#dcdcdc] pl-[4px] pt-[1px]">Lst file…</div>
        </div>

        <div class="ml-[13px] w-[832px] h-[630px] border-t border-l border-[#dcdcdc] border-r border-r-[#6e6e6e] border-b border-b-[#6e6e6e] shrink-0">
          <div class="mt-[5px] h-[21px] flex items-center justify-between pl-[14px] pr-[15px] text-[11.5px]">
            <span class="whitespace-pre tracking-[-0.4px]">102 message(s) found (total:  102 message(s))</span>
            <div class="w-[81px] h-[21px] bg-[#e1e1e1] border border-[#adadad] text-center leading-[20px]">Collapse</div>
          </div>

          <!-- Message grid -->
          <div class="mt-[5px] ml-[11px] flex">
            <div class="w-[789px] h-[419px] border-b border-white overflow-hidden">
              <div id="grid" class="border-t border-l border-[#6e6e6e] font-['Liberation_Sans',sans-serif] text-[11px] tracking-normal"></div>
            </div>
            <div class="w-[16px] flex flex-col items-center relative">
              <svg class="mt-[7px]" width="9" height="6" viewBox="0 0 9 6"><path d="M1 5l3.500-3.500L8 5" fill="none" stroke="#606060" stroke-width="2" /></svg>
              <div class="mt-[369px] w-full h-[18px] bg-[#cdcdcd]"></div>
              <svg class="mt-[6px]" width="9" height="6" viewBox="0 0 9 6"><path d="M1 1l3.500 3.500L8 1" fill="none" stroke="#606060" stroke-width="2" /></svg>
            </div>
          </div>
          <div class="ml-[11px] w-[789px] h-[16px] flex items-center">
            <svg class="ml-[5px]" width="6" height="9" viewBox="0 0 6 9"><path d="M5 1L1.500 4.500 5 8" fill="none" stroke="#606060" stroke-width="2" /></svg>
            <div class="ml-[5px] w-[17px] h-[15px] bg-[#cdcdcd]"></div>
            <svg class="ml-auto mr-[6px]" width="6" height="9" viewBox="0 0 6 9"><path d="M1 1l3.500 3.500L1 8" fill="none" stroke="#606060" stroke-width="2" /></svg>
          </div>

          <!-- Message filter -->
          <div class="mt-[12px] ml-[13px] w-[805px] h-[132px] border border-[#dcdcdc] text-[11.5px] tracking-[-0.3px]">
            <div class="ml-[6px] -mt-[7px] w-fit h-[15px] bg-[#f0f0f0] px-px">Message filter</div>
            <div class="mt-px h-[21px] flex items-center">
              <div class="ml-[11px] w-[14px] h-[14px] border border-[#333] bg-[#f0f0f0]"></div>
              <span class="ml-px w-[106px]">Severity</span>
              <div class="w-[71px] h-[21px] border border-[#d9d9d9] flex items-center pl-[2px]">
                <div class="w-[49px] h-[15px] bg-[#e6e6e6] text-[#7a7a7a] leading-[15px] pl-[2px]">Notice</div>
                <svg class="ml-[7px]" width="9" height="6" viewBox="0 0 9 6"><path d="M1 1l3.500 4L8 1" fill="none" stroke="#9a9a9a" /></svg>
              </div>
            </div>
            <div class="mt-[7px] h-[23px] flex items-center">
              <div class="ml-[11px] w-[14px] h-[14px] border border-[#333] bg-[#f0f0f0]"></div>
              <span class="ml-px w-[105px]">Time (h)</span>
              <span class="w-[30px]">from</span>
              <div class="w-[60px] h-[23px] border border-[#d9d9d9] text-[#7a7a7a] pl-[5px] leading-[20px]">0.000</div>
              <span class="w-[24px] pl-[7px]">to</span>
              <div class="w-[60px] h-[23px] border border-[#d9d9d9] text-[#7a7a7a] pl-[5px] leading-[20px]">24.000</div>
              <div class="ml-[13px] w-[73px] h-[21px] bg-[#cccccc] border border-[#bfbfbf] text-[#7a7a7a] text-center leading-[20px]">Refresh</div>
            </div>
            <div class="mt-[8px] h-[21px] flex items-center">
              <div class="ml-[11px] w-[14px] h-[14px] border border-[#333] bg-[#f0f0f0]"></div>
              <span class="ml-px w-[102px]">Unit number</span>
              <div class="w-[72px] h-[21px] border border-[#d9d9d9] flex items-center pl-[2px]">
                <div class="w-[49px] h-[15px] bg-[#e6e6e6] text-[#7a7a7a] leading-[15px] pl-[2px]">0</div>
                <svg class="ml-[7px]" width="9" height="6" viewBox="0 0 9 6"><path d="M1 1l3.500 4L8 1" fill="none" stroke="#9a9a9a" /></svg>
              </div>
            </div>
            <div class="mt-[8px] h-[21px] flex items-center">
              <div class="ml-[11px] w-[14px] h-[14px] border border-[#333] bg-[#f0f0f0]"></div>
              <span class="ml-px w-[102px]">Type number</span>
              <div class="w-[72px] h-[21px] border border-[#d9d9d9] flex items-center pl-[2px]">
                <div class="w-[49px] h-[15px] bg-[#e6e6e6] text-[#7a7a7a] leading-[15px] pl-[2px]">0</div>
                <svg class="ml-[7px]" width="9" height="6" viewBox="0 0 9 6"><path d="M1 1l3.500 4L8 1" fill="none" stroke="#9a9a9a" /></svg>
              </div>
            </div>
          </div>
        </div>
      </div>
    </div>

    <script type="text/javascript">
      const cols = 'grid grid-cols-[20px_75px_70px_40px_40px_543px]';
      const cell = 'border-r border-b border-[#6e6e6e] overflow-hidden whitespace-nowrap';
      const warnings = [[78,88],[79,89],[80,90],[81,103],[82,104],[83,105],[84,106],[85,107],[86,108],[87,109],[88,110],[89,111],[90,112],[91,113],[92,114],[93,127],[94,128],[95,129],[96,130],[97,131],[98,132],[99,133],[10,134]];

      function row(no, severity, time, unit, type, message) {
        return `<div class="${cols} h-[16px] leading-[15px]">
          <div class="${cell} bg-[#f0f0f0] pl-[4px]">${no}</div>
          <div class="${cell} bg-white pl-[4px]">${severity}</div>
          <div class="${cell} bg-white text-right pr-[5px]">${time}</div>
          <div class="${cell} bg-white text-right pr-[5px]">${unit}</div>
          <div class="${cell} bg-white text-right pr-[5px]">${type}</div>
          <div class="border-b border-[#6e6e6e] overflow-hidden whitespace-nowrap bg-white pl-[4px] tracking-[-0.1px]">${message}</div>
        </div>`;
      }

      const warningText = '<span class="inline-block w-[90px]">Message</span><span class="inline-block w-[338px]">: Convergence of the internal iteration of TYPE 56 not attained within</span>100max. number of internal iterations';
      const errorText = '<span class="inline-block w-[101px]">TRNSYS Message</span>450 : The maximum number of warnings allowed per simulation has been exceeded. Please fix the problem';

      let html = `<div class="${cols} h-[19px] bg-[#f0f0f0] font-bold leading-[18px] text-center">
        <div class="${cell}">No</div><div class="${cell}">Severity</div><div class="${cell}">Time (h)</div>
        <div class="${cell}">Unit</div><div class="${cell}">Type</div><div class="border-b border-[#6e6e6e] pl-[8px]">Message</div></div>`;
      for (const w of warnings) html += row(w[0], 'Warning', w[1] + '.000', 56, 56, warningText);
      html += row(10, 'Error', '134.000', 0, 0, errorText);
      document.getElementById('grid').innerHTML = html;

      const libraries = ['Applications Library (TESS)','Cogeneration (CHP) Library (TESS)','Controllers','Controllers Library (TESS)','Electrical','Electrical Library (TESS)','GHP Library (TESS)','Ground Coupling Library (TESS)','Heat Exchangers','High Temperature Solar (TESS)','HVAC','HVAC Library (TESS)','Hydrogen Systems','Hydronics','Hydronics Library (TESS)','Loads and Structures','Loads and Structures (TESS)','Obsolete','Optimization Library (TESS)','Output','Physical Phenomena','Solar Library (TESS)','Solar Thermal Collectors','Storage Tank Library (TESS)','Thermal Storage','Utility','Utility Library (TESS)','Weather Data Reading and Processing'];
      document.getElementById('tree').innerHTML = libraries.map((name, i) => `<div class="h-[16px] flex items-center">
        <svg class="ml-[7px] shrink-0" width="31" height="16" viewBox="0 0 31 16">
          <path d="M5.500 ${i == 0 ? 8 : 0}V${i == 27 ? 8 : 16}M10 8.500h6" stroke="#808080" stroke-dasharray="1 1" />
          <rect x="1.500" y="4.500" width="8" height="8" fill="#fff" stroke="#7a86a8" />
          <path d="M3 8.500h5M5.500 6v5" stroke="#1a2f6c" />
          <path d="M16.500 3.500l1-1h4l1 1h6v11h-12z" fill="#f4e878" stroke="#222" />
          <path d="M17 5h11" stroke="#fff9c8" />
        </svg>
        <span class="ml-[6px]">${name}</span></div>`).join('');
    </script>
  </body>
</html>
